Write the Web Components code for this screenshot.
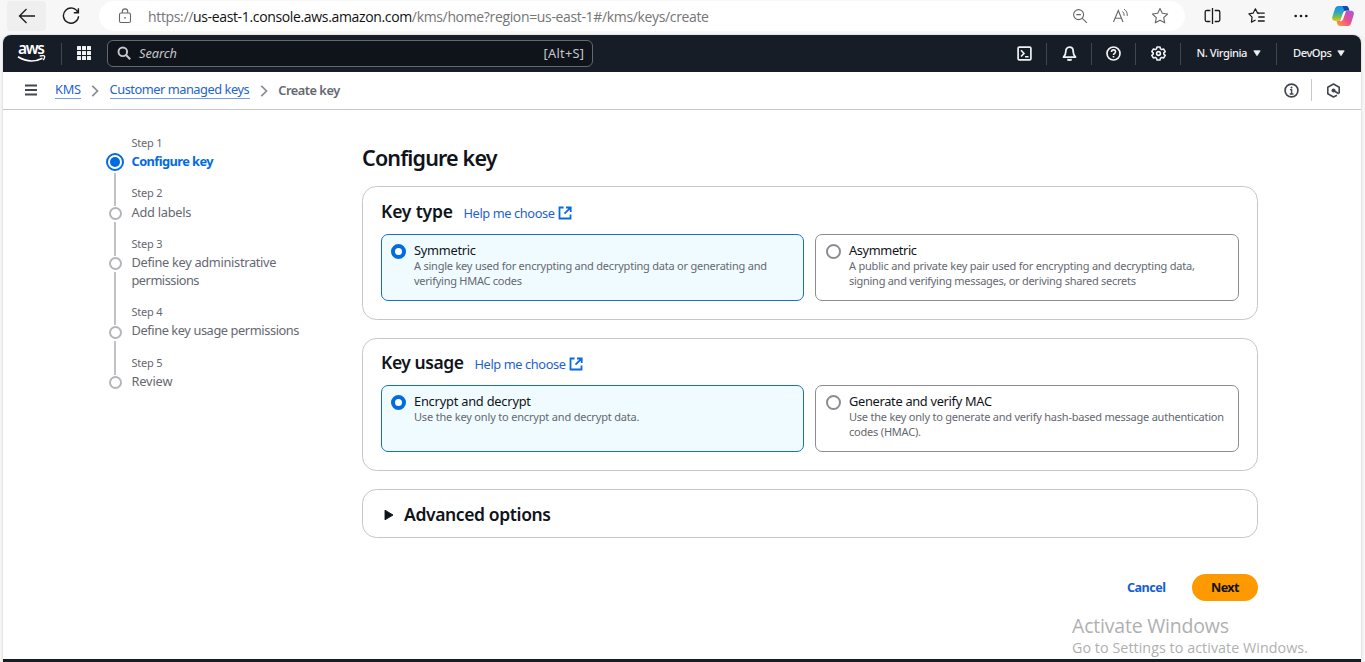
<!DOCTYPE html>
<html lang="en">
<head>
<meta charset="utf-8">
<title>Create key - KMS</title>
<style>
html,body{margin:0;height:100%;overflow:hidden}
body{font-family:"Noto Sans","Open Sans",sans-serif;font-size:12.8px;color:#0f141a;background:#f5f5f5}
</style>
</head>
<body>
<kms-page></kms-page>
<script>
const define=(name,html,setup)=>customElements.define(name,class extends HTMLElement{
  connectedCallback(){
    if(this.shadowRoot)return;
    const root=this.attachShadow({mode:'open'});
    root.innerHTML=typeof html==='function'?html(this):html;
    if(setup)setup(this,root);
  }
});

/* One line of text, tracked so that it spans the width in its w attribute. */
define('ui-text',`<style>:host{display:inline-block;white-space:nowrap;flex:none}</style><slot></slot>`,el=>{
  const w=parseFloat(el.getAttribute('w'));
  if(!w)return;
  const natural=el.getBoundingClientRect().width;
  el.style.letterSpacing=((w-natural)/(el.textContent.length-1)).toFixed(3)+'px';
  el.style.width=w+'px';
});

const ICONS={
  back:[18,18,'<path d="M17 9H1.5M8.5 2L1.5 9l7 7" stroke-width="1.3"/>'],
  reload:[18,18,'<path d="M16 5.6A7.6 7.6 0 1 0 16.6 9.2M16.4 1.2V5.8H11.8" stroke-width="1.4"/>'],
  lock:[14,16,'<rect x="1.5" y="5" width="11" height="9.5" rx="1.5" stroke-width="1.1"/><path d="M4.3 5V3.6a2.7 2.7 0 0 1 5.4 0V5" stroke-width="1.1"/><circle cx="7" cy="9.8" r=".9" fill="currentColor" stroke="none"/>'],
  zoomout:[16,16,'<circle cx="6.6" cy="6.6" r="5" stroke-width="1.1"/><path d="M10.3 10.3l4.6 4.6M4.3 6.6h4.6" stroke-width="1.1"/>'],
  aloud:[17,16,'<path d="M1.500 14L6.300 2.500l4.700 11.500M3.100 10.300h6.300" stroke-width="1.100"/><path d="M10.300 3.400q2.200 1.300 1.800 4.400M12 1.200q3.800 2.200 3.200 6.800" stroke-width="1"/>'],
  star:[18,18,'<path d="M9 1.5l2.3 4.8 5.3.7-3.9 3.6 1 5.2L9 13.2l-4.7 2.600 1-5.200L1.400 7l5.300-.7z" stroke-width="1.100" stroke-linejoin="round"/>'],
  split:[17,16,'<path d="M8.5 0v16" stroke-width="1.3"/><path d="M6.3 2.5H2.7q-1.5 0-1.5 1.5v8q0 1.500 1.500 1.500H6.300M10.700 2.500h3.600q1.500 0 1.500 1.500v8q0 1.500-1.500 1.500H10.700" stroke-width="1.300"/>'],
  favs:[18,18,'<path d="M10.900 6.200H9.600L7.400 1.800 5.100 6.200.900 6.900l3.200 3.200-.7 5 4.200-2.100" stroke-width="1.200" stroke-linejoin="round"/><path d="M9.300 6.200h7.400M10.300 10h6.400M9.900 14h6.800" stroke-width="1.300"/>'],
  dots:[16,4,'<g fill="currentColor" stroke="none"><circle cx="2.700" cy="2" r="1.350"/><circle cx="8" cy="2" r="1.350"/><circle cx="13.300" cy="2" r="1.350"/></g>'],
  copilot:[24,22,`<defs><linearGradient id="a" x1="0" y1="0" x2="0" y2="1"><stop offset="0" stop-color="#1b90e6"/><stop offset=".45" stop-color="#2fa8c0"/><stop offset=".75" stop-color="#7fbf4a"/><stop offset="1" stop-color="#f5c400"/></linearGradient><linearGradient id="b" x1="1" y1="0" x2="0" y2="1"><stop offset="0" stop-color="#9b59e8"/><stop offset=".5" stop-color="#ec4f8c"/><stop offset="1" stop-color="#ff9d3c"/></linearGradient></defs><g stroke="none"><path d="M7 1h8q2 0 2.600 2l.8 2.500h-3q-2 0-2.700 2.300L10.500 14q-.6 2-2.500 2H4Q.4 15.500 1.300 12L4 3.500Q4.800 1 7 1z" fill="url(#a)"/><path d="M11.500 1H15q2 0 2.600 2l.8 2.500h-3L13.500 6z" fill="#1546b8"/><path d="M17 21H9q-2 0-2.600-2l-.8-3H8q2 0 2.700-2.300L13.300 8q.7-2.300 2.700-2.300h4q3.600.3 2.700 4L20 18.500Q19.200 21 17 21z" fill="url(#b)"/><path d="M11.800 8.500q.4-1.500 1.700-2.300L15 6l-2.800 8q-.6 2-2.200 2.400l-.8-.4z" fill="#fff"/></g>`],
  aws:[30,20,'<path d="M1 13.800q12.400 7.600 24.500 1.400" stroke-width="1.700"/><path d="M22.700 13q4.700-1 5 .4.200 1.500-1.500 3.600" stroke-width="1.300"/>'],
  apps:[14,14,'<g fill="currentColor" stroke="none">'+[0,5,10].map(y=>[0,5,10].map(x=>`<rect x="${x}" y="${y}" width="4" height="4" rx=".5"/>`).join('')).join('')+'</g>'],
  search:[14,14,'<circle cx="5.800" cy="5.800" r="4.300" stroke-width="1.900"/><path d="M9 9l4.200 4.200" stroke-width="2.100"/>'],
  shell:[15,15,'<rect x="1.100" y="1.100" width="12.800" height="12.800" rx="1.200" stroke-width="1.700"/><path d="M4 4.300l3 3.100-3 3.100M8 10.800h3.600" stroke-width="1.600"/>'],
  bell:[15,15,'<path d="M7.500 1.200c-2.700 0-3.700 2-3.700 4.200 0 2.900-.8 4.200-2.300 5.700h12c-1.500-1.500-2.300-2.800-2.300-5.700 0-2.200-1-4.200-3.700-4.200z" stroke-width="1.800" stroke-linejoin="round"/><path d="M5.300 13.400q2.200 1.300 4.400 0" stroke-width="1.900"/>'],
  help:[15,15,'<circle cx="7.500" cy="7.500" r="6.500" stroke-width="1.700"/><path d="M5.500 6q0-2.100 2-2.100t2 1.900q0 1.100-1 1.700-1 .5-1 1.500M7.500 10v1.500" stroke-width="1.600"/>'],
  gear:[15,15,'<path d="M6 1h3l.5 1.900 1.300.7 1.900-.5 1.500 2.500-1.400 1.300v1.200l1.400 1.300-1.500 2.500-1.900-.5-1.300.7L9 14H6l-.5-1.900-1.300-.7-1.900.5L.800 9.400l1.400-1.300V6.900L.800 5.600l1.500-2.500 1.900.5 1.300-.7z" stroke-width="1.600" stroke-linejoin="round"/><circle cx="7.500" cy="7.500" r="1.900" stroke-width="1.600"/>'],
  down:[8,7,'<path d="M.8.800h6.400L4 5.700z" fill="currentColor" stroke-width=".8" stroke-linejoin="round"/>'],
  menu:[14,12,'<path d="M1 1.500h12M1 6h12M1 10.500h12" stroke-width="1.800"/>'],
  chevron:[8,12,'<path d="M1.300.8L6.500 6l-5.200 5.200" stroke-width="1.700"/>'],
  info:[15,15,'<circle cx="7.500" cy="7.500" r="6.400" stroke-width="1.700"/><path d="M7.600 6.300v4.800M5.900 6.600h1.800M5.700 11h3.800" stroke-width="1.400"/><circle cx="7.500" cy="4.400" r="1" fill="currentColor" stroke="none"/>'],
  hexa:[15,15,'<path d="M11 12.300L7.500 14l-5.700-3.200V4.200L7.500 1l5.700 3.200v6.300" stroke-width="1.600" stroke-linejoin="round"/><path d="M7.500 7.500l5.300 3.300" stroke-width="1.800"/><circle cx="7.500" cy="7.500" r="2" fill="currentColor" stroke="none"/>'],
  external:[14,14,'<path d="M5.600 1.500H1.500v11h11V8.400" stroke-width="1.800"/><path d="M8 1.500h4.700V6M12.300 1.900L6.500 7.700" stroke-width="1.800"/>'],
  right:[10,12,'<path d="M1 1.200v9.600L9 6z" fill="currentColor" stroke-width=".9" stroke-linejoin="round"/>']
};
define('ui-icon',el=>{
  const [w,h,body]=ICONS[el.getAttribute('name')];
  return `<style>:host{display:block;flex:none;width:${w}px;height:${h}px}svg{display:block}</style>
  <svg width="${w}" height="${h}" viewBox="0 0 ${w} ${h}" fill="none" stroke="currentColor">${body}</svg>`;
});

define('browser-bar',`<style>
:host{display:flex;height:35px;box-sizing:border-box;padding:1px 0 4px 7px;background:#f7f7f7;color:#1b1b1b;align-items:flex-start}
.b{display:grid;place-items:center;height:30px;width:39px;border-radius:4px;flex:none}
.on{background:#efefef}
.r{width:49px}
.pill{flex:none;width:1086px;margin-left:4px;height:30px;background:#fff;border-radius:15px;display:flex;align-items:center;box-sizing:border-box;padding:0 5px 0 19px;color:#666}
.pill .b{width:40px}
.url{margin:0 auto 0 16px;font-family:"Open Sans","Noto Sans",sans-serif;font-size:14px;color:#757575}
.url b{font-weight:400;color:#111}
.tools{display:grid;grid-template-columns:44px 45px 43px 42px;margin-left:5px;flex:none}
.tools .b{width:auto}
</style>
<div class="b on"><ui-icon name="back"></ui-icon></div>
<div class="b r"><ui-icon name="reload"></ui-icon></div>
<div class="pill"><ui-icon name="lock"></ui-icon><ui-text class="url" w="561">https://<b>us-east-1.console.aws.amazon.com</b>/kms/home?region=us-east-1#/kms/keys/create</ui-text>
<div class="b"><ui-icon name="zoomout"></ui-icon></div><div class="b"><ui-icon name="aloud"></ui-icon></div><div class="b"><ui-icon name="star"></ui-icon></div></div>
<div class="tools"><div class="b"><ui-icon name="split"></ui-icon></div><div class="b"><ui-icon name="favs"></ui-icon></div><div class="b"><ui-icon name="dots"></ui-icon></div><div class="b"><ui-icon name="copilot"></ui-icon></div></div>`);

define('aws-logo',`<style>:host{display:grid;width:30px;height:22px;flex:none;color:#fff}
ui-text,ui-icon{grid-area:1/1}ui-text{font-size:15.500px;font-weight:600;line-height:14px;margin:-2px 0 0 1px}ui-icon{margin-top:0}</style>
<ui-text w="27">aws</ui-text><ui-icon name="aws"></ui-icon>`);

define('aws-nav',`<style>
:host{display:flex;height:37px;background:#161d26;align-items:center;color:#f0f1f3;box-sizing:border-box;padding-left:14px}
.sep{width:1px;height:22px;background:#424650;margin:0 15px 0 14px}
ui-icon[name=apps]{margin-top:-1px}
.search{margin-left:16px;width:486px;height:27px;box-sizing:border-box;border:1px solid #656871;border-radius:6px;background:#0f141a;display:flex;align-items:center;padding:0 8px 1px 9px;color:#c6c6cd}
.search i{margin:0 auto 0 8px}
.cells{margin-left:auto;display:grid;grid-template-columns:44px 45px 44px 45px 96px 85px;font-size:11.200px;font-weight:500}
.cells>div{height:22px;display:flex;align-items:center;justify-content:center;gap:5px;border-left:1px solid #424650;box-sizing:border-box;padding-bottom:1px}
.cells>div:first-child{border-color:transparent}
.cells>div:nth-child(n+5){padding-bottom:2px}
.cells ui-icon[name=down]{margin-top:1px}
</style>
<aws-logo></aws-logo><div class="sep"></div><ui-icon name="apps"></ui-icon>
<div class="search"><ui-icon name="search"></ui-icon><i><ui-text w="38">Search</ui-text></i><ui-text w="40.500">[Alt+S]</ui-text></div>
<div class="cells"><div><ui-icon name="shell"></ui-icon></div><div><ui-icon name="bell"></ui-icon></div><div><ui-icon name="help"></ui-icon></div><div><ui-icon name="gear"></ui-icon></div>
<div><ui-text w="51">N. Virginia</ui-text><ui-icon name="down"></ui-icon></div><div><ui-text w="39">DevOps</ui-text><ui-icon name="down"></ui-icon></div></div>`);

define('crumb-bar',`<style>
:host{display:flex;height:38px;box-sizing:border-box;border-bottom:1px solid #c6c6cd;align-items:center;padding:0 20.500px 1px 21px;color:#424650}
a{color:#2563d0;border-bottom:1px solid #6f9fe8;line-height:15px;height:16px}
ui-icon[name=menu]{margin-right:17px}
ui-icon[name=chevron]{margin:1px 10.300px 0;color:#8c8c94}
b{font-weight:600;color:#656871;line-height:16px;margin-top:-1px}
.end{margin-left:auto;display:flex;align-items:center}
.end i{width:1px;height:22px;background:#c6c6cd;margin:0 14px 0 12px}
</style>
<ui-icon name="menu"></ui-icon><a><ui-text w="26">KMS</ui-text></a><ui-icon name="chevron"></ui-icon><a><ui-text w="140">Customer managed keys</ui-text></a><ui-icon name="chevron"></ui-icon><b><ui-text w="62">Create key</ui-text></b>
<div class="end"><ui-icon name="info"></ui-icon><i></i><ui-icon name="hexa"></ui-icon></div>`);

define('wizard-step',el=>`<style>
:host{display:grid;grid-template-columns:18px 1fr;column-gap:7.500px;color:#656871}
.rail{display:flex;flex-direction:column;align-items:center}
.line{width:2px;background:#c0c0c7}
.top{height:21.500px;margin-bottom:1px}
.dot{width:9px;height:9px;border:2px solid #b4b4bb;border-radius:50%;flex:none}
.rest{flex:1;margin-top:2px}
:host([first]) .top,:host([last]) .rest{background:none}
:host([first]) .top{height:19px;margin:0}
:host([first]) .dot{width:10px;height:10px;background:#006ce0;background-clip:content-box;padding:2px;border-color:#006ce0}
.txt{padding-bottom:14.200px;line-height:18px}
small{display:block;font-size:11px;height:18.200px}
:host([first]) .t{color:#006ce0;font-weight:700}
</style>
<div class="rail"><div class="line top"></div><div class="dot"></div><div class="line rest"></div></div>
<div class="txt"><small><ui-text w="31">${el.getAttribute('label')}</ui-text></small><div class="t"><slot></slot></div></div>`);

define('link-help',`<style>:host{display:flex;align-items:center;gap:2.500px;color:#1f5fd0;font-size:12.800px;font-weight:400;padding-top:4px}ui-icon{color:#0b6bdc}</style><ui-text w="91.500">Help me choose</ui-text><ui-icon name="external"></ui-icon>`);

define('ui-card',`<style>:host{display:block;box-sizing:border-box;border:1px solid #c6c6cd;border-radius:14.400px;padding:14px 18px;background:#fff}
header{display:flex;align-items:center;height:20px;gap:10.500px;font-size:17.500px;font-weight:600;line-height:20px;margin-bottom:13px}
.tiles{display:grid;grid-template-columns:423px 424px;column-gap:11px}
:host([tight]){padding-top:13px}
:host([compact]) header{margin:0}:host([compact]){padding-left:20.500px}
::slotted(ui-icon){margin-top:2px}
</style><header><slot name="head"></slot></header><div class="tiles"><slot></slot></div>`);

define('radio-tile',`<style>
:host{display:grid;grid-template-columns:15px 1fr;column-gap:8px;box-sizing:border-box;height:67px;border:1px solid #8c8c94;border-radius:7px;padding:7px 9px 7px 10px}
:host([checked]){background:#f0fbff;border-color:#1b6fc0;padding-left:9px}
.r{box-sizing:border-box;width:15px;height:15px;border:2px solid #8c8c94;border-radius:50%;background:#fff;margin-top:1.500px}
:host([checked]) .r{border:4.500px solid #006ce0;margin-left:.400px}
.l{line-height:16.500px;height:17.400px}
.d{font-size:11px;line-height:14.600px;color:#656871}
</style><div class="r"></div><div><div class="l"><slot name="label"></slot></div><div class="d"><slot></slot></div></div>`);

define('form-actions',`<style>:host{display:flex;justify-content:flex-end;align-items:center;gap:26px;font-weight:700;font-size:12.600px;color:#1560cf}
button{font:inherit;color:#0f141a;border:0;background:#ff9900;border-radius:14px;width:66px;height:27px;padding:0;display:grid;place-items:center}</style>
<ui-text w="39">Cancel</ui-text><button><ui-text w="28.500">Next</ui-text></button>`);

define('activation-note',`<style>:host{position:absolute;left:1072px;top:613px;color:#b0b0b0;font-family:"Open Sans","Noto Sans",sans-serif;font-weight:400}
div{font-size:19.500px;line-height:25px}p{margin:-1px 0 0;font-size:14.300px;line-height:21px}</style>
<div><ui-text w="157">Activate Windows</ui-text></div><p><ui-text w="236">Go to Settings to activate Windows.</ui-text></p>`);

define('kms-page',`<style>
:host{display:flex;flex-direction:column;height:662px;width:1365px}
.frame{flex:1;width:1358px;margin-left:3px;border-radius:8px 8px 0 0;overflow:hidden;background:#fff;display:flex;flex-direction:column;box-shadow:0 0 2px #bbb}
.body{display:grid;grid-template-columns:210px 896px;column-gap:46px;padding-left:103px;flex:1}
.steps{padding-top:24px}
main{display:flex;flex-direction:column;padding-top:35px}
h1{margin:0 0 16px;font-size:21.500px;line-height:25px;font-weight:600}
ui-card{margin-bottom:18px}
form-actions{margin-top:18px}
.foot{height:3px;background:#161d26}
</style>
<browser-bar></browser-bar>
<div class="frame"><aws-nav></aws-nav><crumb-bar></crumb-bar>
<div class="body"><div class="steps">
<wizard-step first label="Step 1"><ui-text w="82">Configure key</ui-text></wizard-step>
<wizard-step label="Step 2"><ui-text w="60">Add labels</ui-text></wizard-step>
<wizard-step label="Step 3"><ui-text w="145">Define key administrative</ui-text><br><ui-text w="68">permissions</ui-text></wizard-step>
<wizard-step label="Step 4"><ui-text w="168">Define key usage permissions</ui-text></wizard-step>
<wizard-step last label="Step 5"><ui-text w="41">Review</ui-text></wizard-step>
</div><main>
<h1><ui-text w="135.500">Configure key</ui-text></h1>
<ui-card style="height:134px"><ui-text slot="head" w="72">Key type</ui-text><link-help slot="head"></link-help>
<radio-tile checked><ui-text slot="label" w="62">Symmetric</ui-text><ui-text w="353">A single key used for encrypting and decrypting data or generating and</ui-text><br><ui-text w="108">verifying HMAC codes</ui-text></radio-tile>
<radio-tile><ui-text slot="label" w="68">Asymmetric</ui-text><ui-text w="346">A public and private key pair used for encrypting and decrypting data,</ui-text><br><ui-text w="287">signing and verifying messages, or deriving shared secrets</ui-text></radio-tile></ui-card>
<ui-card tight style="height:133px"><ui-text slot="head" w="83">Key usage</ui-text><link-help slot="head"></link-help>
<radio-tile checked><ui-text slot="label" w="117">Encrypt and decrypt</ui-text><ui-text w="225.500">Use the key only to encrypt and decrypt data.</ui-text></radio-tile>
<radio-tile><ui-text slot="label" w="143">Generate and verify MAC</ui-text><ui-text w="375">Use the key only to generate and verify hash-based message authentication</ui-text><br><ui-text w="72">codes (HMAC).</ui-text></radio-tile></ui-card>
<ui-card compact style="height:49px"><ui-icon slot="head" name="right"></ui-icon><ui-text slot="head" w="147">Advanced options</ui-text></ui-card>
<form-actions></form-actions>
</main></div><div class="foot"></div></div>
<activation-note></activation-note>`);
</script>
</body>
</html>
